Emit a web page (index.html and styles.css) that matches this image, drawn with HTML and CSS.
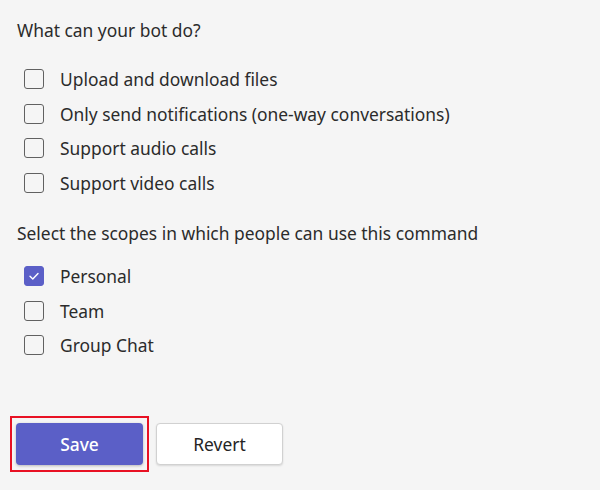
FILE: index.html
```html
<!DOCTYPE html>
<html>
<head>
<meta charset="utf-8">
<link rel="stylesheet" href="styles.css">
</head>
<body>
<div class="page">
  <div class="title first">What can your bot do?</div>
  <ul class="options caps">
    <li class="row"><span class="box"></span><span class="label">Upload and download files</span></li>
    <li class="row"><span class="box"></span><span class="label">Only send notifications (one-way conversations)</span></li>
    <li class="row"><span class="box"></span><span class="label">Support audio calls</span></li>
    <li class="row"><span class="box"></span><span class="label">Support video calls</span></li>
  </ul>
  <div class="title second">Select the scopes in which people can use this command</div>
  <ul class="options scopes">
    <li class="row"><span class="box checked"><svg width="12" height="12" viewBox="0 0 12 12"><path d="M2 6.2 L4.8 9 L10 3.4" fill="none" stroke="#fff" stroke-width="1.4" stroke-linecap="round" stroke-linejoin="round"/></svg></span><span class="label">Personal</span></li>
    <li class="row"><span class="box"></span><span class="label">Team</span></li>
    <li class="row"><span class="box"></span><span class="label">Group Chat</span></li>
  </ul>
  <div class="actions">
    <div class="highlight"><button class="btn primary">Save</button></div>
    <button class="btn secondary">Revert</button>
  </div>
</div>
</body>
</html>
```
FILE: styles.css
```css
html, body {
  margin: 0;
  padding: 0;
  background: #f5f5f5;
}
body {
  font-family: "Noto Sans", "Open Sans", sans-serif;
  font-size: 17.4px;
  color: #2b2b2b;
}
.page {
  padding: 18px 0 0 17px;
}
.title {
  line-height: 24px;
  height: 24px;
}
.options {
  list-style: none;
  margin: 0;
  padding: 0 0 0 7px;
}
.caps {
  margin-top: 20px;
}
.second {
  margin-top: 21px;
}
.scopes {
  margin-top: 14px;
}
.row {
  display: flex;
  align-items: center;
  height: 34.5px;
}
.box {
  box-sizing: border-box;
  width: 20px;
  height: 20px;
  border: 1px solid #616161;
  border-radius: 3px;
  margin-right: 16px;
  display: flex;
  align-items: center;
  justify-content: center;
  flex: none;
}
.box.checked {
  background: #5b5fc7;
  border-color: #5b5fc7;
}
.label {
  line-height: 22px;
}
.actions {
  display: flex;
  align-items: center;
  gap: 7px;
  margin-top: 53px;
  margin-left: -7px;
}
.highlight {
  border: 2px solid #e81123;
  padding: 5px 4px;
}
.btn {
  box-sizing: border-box;
  width: 127px;
  height: 42px;
  border-radius: 4px;
  font-family: inherit;
  font-size: 17.4px;
  cursor: pointer;
  display: block;
}
.primary {
  background: #5b5fc7;
  color: #fff;
  border: none;
  font-weight: 500;
  box-shadow: 0 1px 3px rgba(0,0,0,0.25);
}
.secondary {
  background: #fff;
  color: #242424;
  border: 1px solid #d1d1d1;
  box-shadow: 0 1px 2px rgba(0,0,0,0.12);
}
```
